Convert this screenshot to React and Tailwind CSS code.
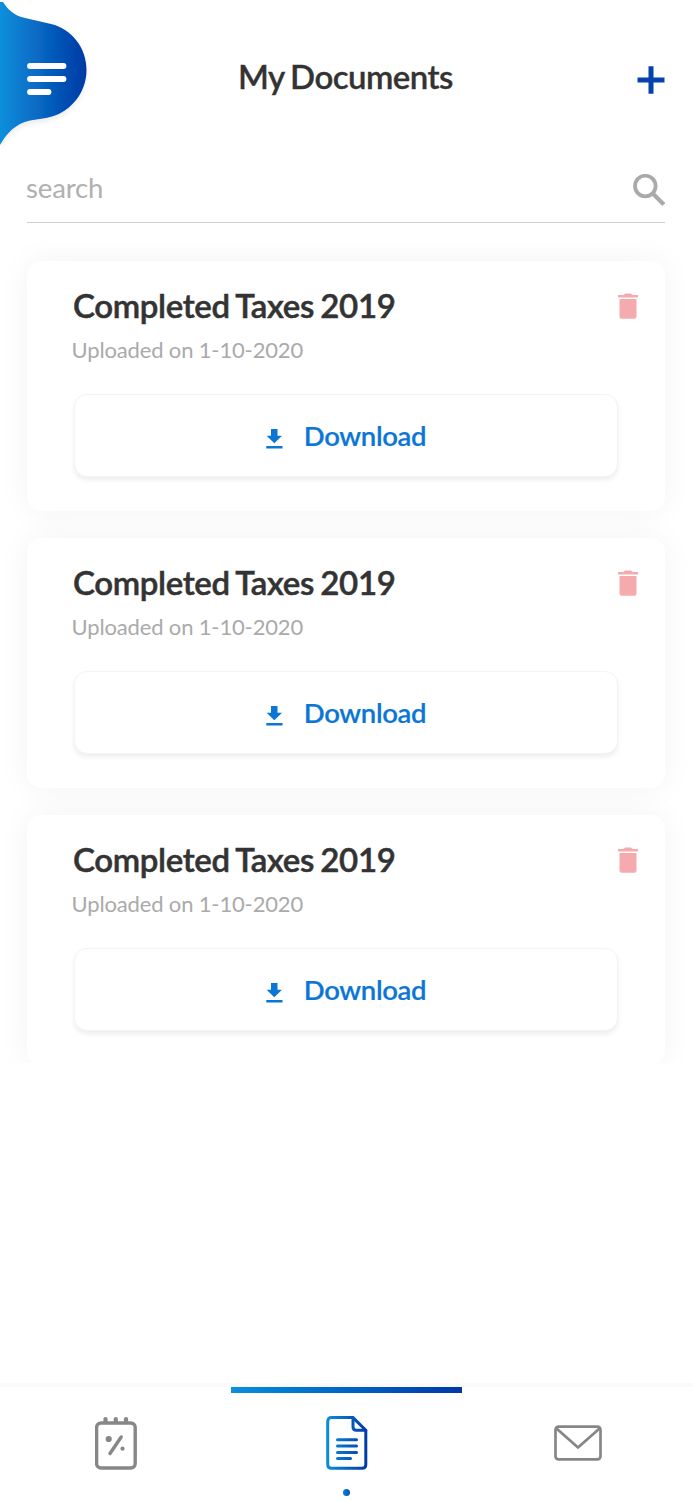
const documents = [
  { id: 1, title: 'Completed Taxes 2019', date: 'Uploaded on 1-10-2020' },
  { id: 2, title: 'Completed Taxes 2019', date: 'Uploaded on 1-10-2020' },
  { id: 3, title: 'Completed Taxes 2019', date: 'Uploaded on 1-10-2020' },
];

function MenuTab() {
  return (
    <svg className="h-[160px] w-[100px] shrink-0" viewBox="0 0 100 160" fill="none">
      <defs>
        <linearGradient id="tab" x1="0" y1="0" x2="87" y2="0" gradientUnits="userSpaceOnUse">
          <stop stopColor="#0c8fdc" />
          <stop offset="1" stopColor="#0138a4" />
        </linearGradient>
        <filter id="tabShadow" x="-20" y="-10" width="130" height="180" filterUnits="userSpaceOnUse">
          <feDropShadow dx="0" dy="3" stdDeviation="2.5" floodColor="#000" floodOpacity="0.08" />
        </filter>
      </defs>
      <path
        d="M0 2H3C8 10 14 15 23 17.500L51 24C72 29 86.500 48 86.500 70C86.500 94 69 114 46 118L30 120.500C15 124 7 133 0 145Z"
        fill="url(#tab)"
        filter="url(#tabShadow)"
      />
      <path d="M30 66H63.500M30 79H63.500M30 92H48.500" stroke="#fff" strokeWidth="5.800" strokeLinecap="round" />
    </svg>
  );
}

function SearchIcon() {
  return (
    <svg className="h-8 w-8" viewBox="0 0 32 32" fill="none" stroke="#aaa">
      <circle cx="12.300" cy="12" r="10.300" strokeWidth="3.800" />
      <path d="M20.300 20L30.800 30.500" strokeWidth="4.200" />
    </svg>
  );
}

function TrashIcon() {
  return (
    <svg className="h-[26px] w-5" viewBox="0 0 20 26" fill="#f5abad">
      <path d="M0 2H5.500L7 0.400H13L14.500 2H20V4.600H0Z" />
      <path d="M1.500 6H18.500V23.500Q18.500 25.700 16.300 25.700H3.700Q1.500 25.700 1.500 23.500Z" />
    </svg>
  );
}

function DownloadIcon() {
  return (
    <svg className="h-5 w-[17px]" viewBox="0 0 17 20" fill="#0b76d6">
      <path d="M5 0H11.500V6.700H16L8.300 14.300L0.600 6.700H5ZM0.300 17H16.500V19.600H0.300Z" />
    </svg>
  );
}

function DocumentCard({ title, date }) {
  return (
    <article className="flex h-[249.500px] shrink-0 flex-col rounded-[14px] bg-white pt-[24px] pr-[27px] pl-[47px] shadow-[0_0_32px_rgba(0,0,0,0.05)]">
      <div className="flex h-[40px] items-start justify-between">
        <h2 className="-ml-[1px] text-[33px] leading-[41px] font-semibold tracking-[-0.350px] [word-spacing:-1.500px] text-[#333] [-webkit-text-stroke:0.500px_#333]">
          {title}
        </h2>
        <button className="mt-[8px] mr-[0.500px]" aria-label="Delete">
          <TrashIcon />
        </button>
      </div>
      <p className="mt-[11px] -ml-[2.500px] text-[22px] leading-[27px] tracking-[-0.150px] text-[#aaa]">{date}</p>
      <button className="mt-[31px] mr-[20px] flex h-[83px] items-center justify-center rounded-[13px] border border-[#f4f4f4] bg-white text-[27.500px] font-semibold text-[#0b76d6] shadow-[0_3px_5px_rgba(0,0,0,0.07)]">
        <span className="mt-[6px] mr-[21px]">
          <DownloadIcon />
        </span>
        <span className="tracking-[-0.350px] [-webkit-text-stroke:0.200px_#0b76d6]">Download</span>
      </button>
    </article>
  );
}

function TaxIcon() {
  return (
    <svg className="h-[54px] w-[42px]" viewBox="0 0 42 54" fill="none" stroke="#878787" strokeLinecap="round" strokeLinejoin="round">
      <rect x="1.600" y="7" width="38.600" height="45" rx="4.500" strokeWidth="3.400" />
      <path d="M10.500 3V6M20.800 3V6M31 3V6" strokeWidth="4.200" />
      <path d="M26.200 21L15 37.500" strokeWidth="3.400" />
      <circle cx="13.700" cy="23" r="3.100" fill="#878787" stroke="none" />
      <circle cx="27.500" cy="32.700" r="2.100" fill="#878787" stroke="none" />
    </svg>
  );
}

function FileIcon() {
  return (
    <svg className="h-[54px] w-[42px]" viewBox="0 0 42 54" fill="none" stroke="url(#file)" strokeWidth="3" strokeLinecap="round" strokeLinejoin="round">
      <defs>
        <linearGradient id="file" x1="0" y1="0" x2="42" y2="0" gradientUnits="userSpaceOnUse">
          <stop stopColor="#0c8fdc" />
          <stop offset="1" stopColor="#0138a4" />
        </linearGradient>
      </defs>
      <path d="M27 1.600H5.500Q1.700 1.600 1.700 5.400V48.500Q1.700 52.300 5.500 52.300H36Q39.800 52.300 39.800 48.500V14.300Z" />
      <path d="M27 1.600V11Q27 14.300 30.300 14.300H39.800" />
      <path d="M11.500 23.800H30.500M11.500 30H30.500M11.500 36.400H30.500M11.500 42.600H24.500" />
    </svg>
  );
}

function MailIcon() {
  return (
    <svg className="h-9 w-12" viewBox="0 0 48 36" fill="none" stroke="#868686" strokeWidth="2.700" strokeLinejoin="round">
      <rect x="1.500" y="1.700" width="45" height="32.600" rx="3" />
      <path d="M2.500 3.500L24 22.500L45.500 3.500" />
    </svg>
  );
}

export default function App() {
  return (
    <div className="flex h-[1500px] w-[693px] flex-col overflow-hidden bg-white font-['Lato',sans-serif]">
      <header className="flex h-[160px] shrink-0 items-start justify-between">
        <MenuTab />
        <h1 className="pt-[56px] pr-[2px] text-[33px] leading-[41px] font-semibold tracking-[-0.550px] [word-spacing:-1.500px] whitespace-nowrap text-[#333] [-webkit-text-stroke:0.300px_#333]">
          My Documents
        </h1>
        <button className="flex w-[100px] justify-end pt-[66px] pr-[28px]" aria-label="Add document">
          <svg className="h-7 w-7" viewBox="0 0 28 28" stroke="#0543ac" strokeWidth="5">
            <path d="M0.500 14H27.500M14 0.200V27.800" />
          </svg>
        </button>
      </header>

      <div className="mr-[28px] ml-[27px] flex h-[63px] shrink-0 items-start justify-between border-b border-[#cfcfcf] pt-[10px]">
        <span className="-ml-[1px] text-[27.500px] leading-[36px] tracking-[-0.150px] text-[#b0b0b0]">search</span>
        <span className="mt-[4px]">
          <SearchIcon />
        </span>
      </div>

      <main className="flex h-[840px] shrink-0 flex-col gap-[27.500px] overflow-hidden pt-[38px] pr-[28px] pl-[27px]">
        {documents.map((doc) => (
          <DocumentCard key={doc.id} title={doc.title} date={doc.date} />
        ))}
      </main>

      <nav className="mt-auto grid h-[117px] shrink-0 grid-cols-3 border-t-[4px] border-[#fafafa]">
        <button className="flex justify-center pt-[29px]" aria-label="Taxes">
          <TaxIcon />
        </button>
        <button className="flex flex-col items-center" aria-label="Documents">
          <span className="h-[6px] w-full bg-linear-to-r from-[#0c8fdc] to-[#0138a4]" />
          <span className="mt-[23px]">
            <FileIcon />
          </span>
          <span className="mt-[19px] mr-[1px] h-[7px] w-[7px] shrink-0 rounded-full bg-linear-to-r from-[#0b7fd3] to-[#0755b8]" />
        </button>
        <button className="flex justify-center pt-[38px]" aria-label="Messages">
          <MailIcon />
        </button>
      </nav>
    </div>
  );
}
